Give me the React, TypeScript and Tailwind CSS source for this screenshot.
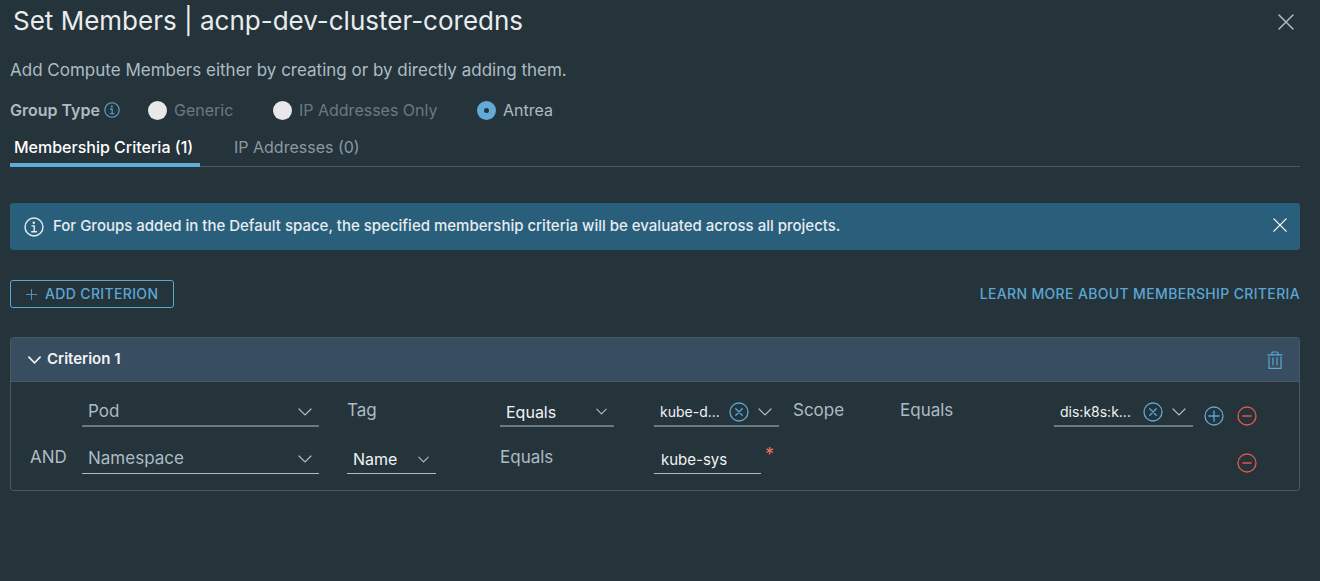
import { useState } from "react";
import type { ReactNode } from "react";

type IconProps = { className?: string };

function ChevronIcon({ className = "" }: IconProps) {
  return (
    <svg viewBox="0 0 14 8" fill="none" stroke="currentColor" strokeLinecap="round" className={`pointer-events-none shrink-0 ${className}`} aria-hidden="true">
      <path d="M1 1l6 6 6-6" />
    </svg>
  );
}

function CloseIcon({ className = "" }: IconProps) {
  return (
    <svg viewBox="0 0 16 16" fill="none" stroke="currentColor" strokeWidth="1.5" strokeLinecap="round" className={className} aria-hidden="true">
      <path d="M1 1l14 14M15 1L1 15" />
    </svg>
  );
}

function InfoIcon({ className = "" }: IconProps) {
  return (
    <svg viewBox="0 0 20 20" fill="none" stroke="currentColor" strokeWidth="1.4" className={className} aria-hidden="true">
      <circle cx="10" cy="10" r="9" />
      <circle cx="9.8" cy="5.7" r="1.2" fill="currentColor" stroke="none" />
      <path d="M7.5 8.9h2.7v5.8M7.2 14.7h5.8" />
    </svg>
  );
}

function CircleIcon({ children }: { children: ReactNode }) {
  return (
    <svg viewBox="0 0 20 20" fill="none" stroke="currentColor" strokeWidth="1.35" strokeLinecap="round" className="size-5" aria-hidden="true">
      <circle cx="10" cy="10" r="9" />
      {children}
    </svg>
  );
}

function TrashIcon() {
  return (
    <svg viewBox="0 0 16 18" fill="none" stroke="currentColor" strokeWidth="1.2" className="h-[18px] w-4" aria-hidden="true">
      <path d="M.5 3.8h15M5 3.4V2q0-1 1-1h4q1 0 1 1v1.4M2 5.5v11.8h12V5.5M6 6.5v8M10 6.5v8" />
    </svg>
  );
}

type FieldProps = { label: string; value: string; thick?: boolean; muted?: boolean; small?: boolean; clearable?: boolean; width: string };

function SelectField({ label, value, thick, muted, small, clearable, width }: FieldProps) {
  const text = muted ? "text-[17px] text-[#adbbc4]" : clearable ? "text-sm text-[#f0f3f5]" : "text-base text-[#f0f3f5]";
  return (
    <div className={`flex h-[31px] items-center pt-[2px] pr-[7px] ${width} ${thick ? "border-b-2 border-[#6b7a81]" : "border-b border-[#adbbc4]"}`}>
      <select aria-label={label} defaultValue={value} className={`h-full min-w-0 flex-1 cursor-pointer appearance-none bg-transparent pl-[6px] outline-none ${text}`}>
        <option>{value}</option>
      </select>
      {clearable && (
        <button type="button" aria-label={`Clear ${label}`} className="mr-[9px] shrink-0 text-[#5ba7d4]">
          <CircleIcon><path d="M6.8 6.8l6.4 6.4M13.2 6.8l-6.4 6.4" /></CircleIcon>
        </button>
      )}
      <ChevronIcon className={small ? "h-[7px] w-[11px] stroke-[1.4] text-[#adbbc4]" : "h-2 w-[14px] stroke-[1.2] text-[#adbbc4]"} />
    </div>
  );
}

function RoundButton({ label, tone, sign }: { label: string; tone: string; sign: string }) {
  return (
    <button type="button" aria-label={label} className={tone}>
      <CircleIcon><path d={sign} /></CircleIcon>
    </button>
  );
}

const MINUS = "M5.8 10h8.4";
const PLUS = "M4.8 10h10.4M10 4.8v10.4";
const ROW = "grid h-[47px] grid-cols-[52px_265fr_153fr_154fr_139fr_107fr_154fr_150fr_95px] pl-[19px]";
const TEXT = "text-[17px] leading-7 text-[#adbbc4]";

const groupTypes = [
  { name: "Generic", disabled: true, width: "w-[125px]" },
  { name: "IP Addresses Only", disabled: true, width: "w-[204px]" },
  { name: "Antrea", disabled: false, width: "" },
];

export default function App() {
  const [bannerOpen, setBannerOpen] = useState(true);
  const [expanded, setExpanded] = useState(true);

  return (
    <main className="min-h-screen bg-[#25333a] pr-5 pl-[10px] font-['Inter',sans-serif] text-[#adbbc4]">
      <header className="flex h-11 items-center justify-between pr-[6px] pl-[3px]">
        <h1 className="pb-[2px] text-[26px] leading-8 text-[#e9ecef]">Set Members | acnp-dev-cluster-coredns</h1>
        <button type="button" aria-label="Close" className="text-[#adbbc4]">
          <CloseIcon className="size-4" />
        </button>
      </header>

      <p className="mt-[14px] text-[17px] leading-6">Add Compute Members either by creating or by directly adding them.</p>

      <div role="radiogroup" aria-labelledby="group-type-label" className="mt-4 flex h-6 items-center text-base">
        <span id="group-type-label" className="font-semibold">Group Type</span>
        <button type="button" aria-label="About group types" className="mr-7 ml-1 text-[#5ba7d4]">
          <InfoIcon className="size-4" />
        </button>
        {groupTypes.map((type) => (
          <label key={type.name} className={`flex items-center gap-[7px] ${type.width} ${type.disabled ? "text-[#6b7a81]" : "text-[#adbbc4]"}`}>
            <input
              type="radio"
              name="group-type"
              defaultChecked={!type.disabled}
              disabled={type.disabled}
              className="size-[19px] shrink-0 appearance-none rounded-full bg-[#e8e8e8] checked:border-7 checked:border-[#63abd7] checked:bg-[#25333a]"
            />
            {type.name}
          </label>
        ))}
      </div>

      <div role="tablist" className="mt-2 flex h-[37px] border-b border-[#495a65] text-base">
        <button type="button" role="tab" aria-selected="true" className="-mb-px min-w-[190px] border-b-4 border-[#63abd7] px-1 text-left font-medium text-white">Membership Criteria (1)</button>
        <button type="button" role="tab" aria-selected="false" className="ml-[34px] pb-[3px] text-[#8c9aa3]">IP Addresses (0)</button>
      </div>

      {bannerOpen && (
        <div role="status" className="mt-9 flex h-[47px] items-center rounded-[3px] bg-[#2a5f7c] pr-[13px] pl-[14px] text-[15px] font-medium text-[#e6ecf0]">
          <InfoIcon className="mr-[9px] size-5 shrink-0" />
          <span className="flex-1">For Groups added in the Default space, the specified membership criteria will be evaluated across all projects.</span>
          <button type="button" aria-label="Dismiss" onClick={() => setBannerOpen(false)} className="pb-[3px] text-white">
            <CloseIcon className="size-[14px]" />
          </button>
        </div>
      )}

      <div className="mt-[30px] flex h-7 items-center justify-between text-sm font-medium tracking-wide text-[#5ba7d4]">
        <button type="button" className="flex h-7 items-center gap-2 rounded-[3px] border border-[#5ba7d4] px-[15px] uppercase">
          <svg viewBox="0 0 11 11" stroke="currentColor" className="size-[11px] opacity-80" aria-hidden="true"><path d="M0 5.5h11M5.5 0v11" /></svg>
          Add Criterion
        </button>
        <a href="#membership-criteria" className="uppercase">Learn more about membership criteria</a>
      </div>

      <section className="mt-[29px] overflow-hidden rounded-[3px] border border-[#495a65]">
        <div className="flex h-11 items-center justify-between border-b border-[#495a65] bg-[#394d61] pr-4 pl-[17px]">
          <button type="button" aria-expanded={expanded} onClick={() => setExpanded(!expanded)} className="flex items-center gap-[6px] text-[15px] font-semibold text-[#f0f3f5]">
            <ChevronIcon className="h-2 w-[13px] stroke-[1.8]" />
            Criterion 1
          </button>
          <button type="button" aria-label="Delete criterion" className="text-[#5ba7d4]"><TrashIcon /></button>
        </div>
        {expanded && (
          <div className="pt-[14px]">
            <div className={ROW}>
              <span />
              <SelectField label="Member type" value="Pod" thick muted width="w-[237px]" />
              <span className={TEXT}>Tag</span>
              <SelectField label="Tag operator" value="Equals" thick small width="w-[114px]" />
              <SelectField label="Tag value" value="kube-d..." thick clearable width="w-[125px]" />
              <span className={TEXT}>Scope</span>
              <span className={TEXT}>Equals</span>
              <SelectField label="Scope value" value="dis:k8s:k..." thick clearable width="w-[139px]" />
              <div className="flex h-10 items-center gap-[13px]">
                <RoundButton label="Add condition" tone="text-[#5ba7d4]" sign={PLUS} />
                <RoundButton label="Remove condition" tone="text-[#e0574b]" sign={MINUS} />
              </div>
            </div>
            <div className={ROW}>
              <span className={TEXT}>AND</span>
              <SelectField label="Second member type" value="Namespace" muted width="w-[237px]" />
              <SelectField label="Attribute" value="Name" small width="w-[89px]" />
              <span className={TEXT}>Equals</span>
              <div className="col-span-4 flex items-start gap-1">
                <input aria-label="Namespace name" required defaultValue="kube-sys" className="h-[31px] w-[107px] border-b border-[#adbbc4] bg-transparent pt-[2px] pl-[7px] text-[15px] text-[#f0f3f5] outline-none" />
                <span className="text-lg leading-6 text-[#f0705c]" aria-hidden="true">*</span>
              </div>
              <div className="flex h-10 items-center pl-[33px]">
                <RoundButton label="Remove second condition" tone="text-[#e0574b]" sign={MINUS} />
              </div>
            </div>
          </div>
        )}
      </section>
    </main>
  );
}
